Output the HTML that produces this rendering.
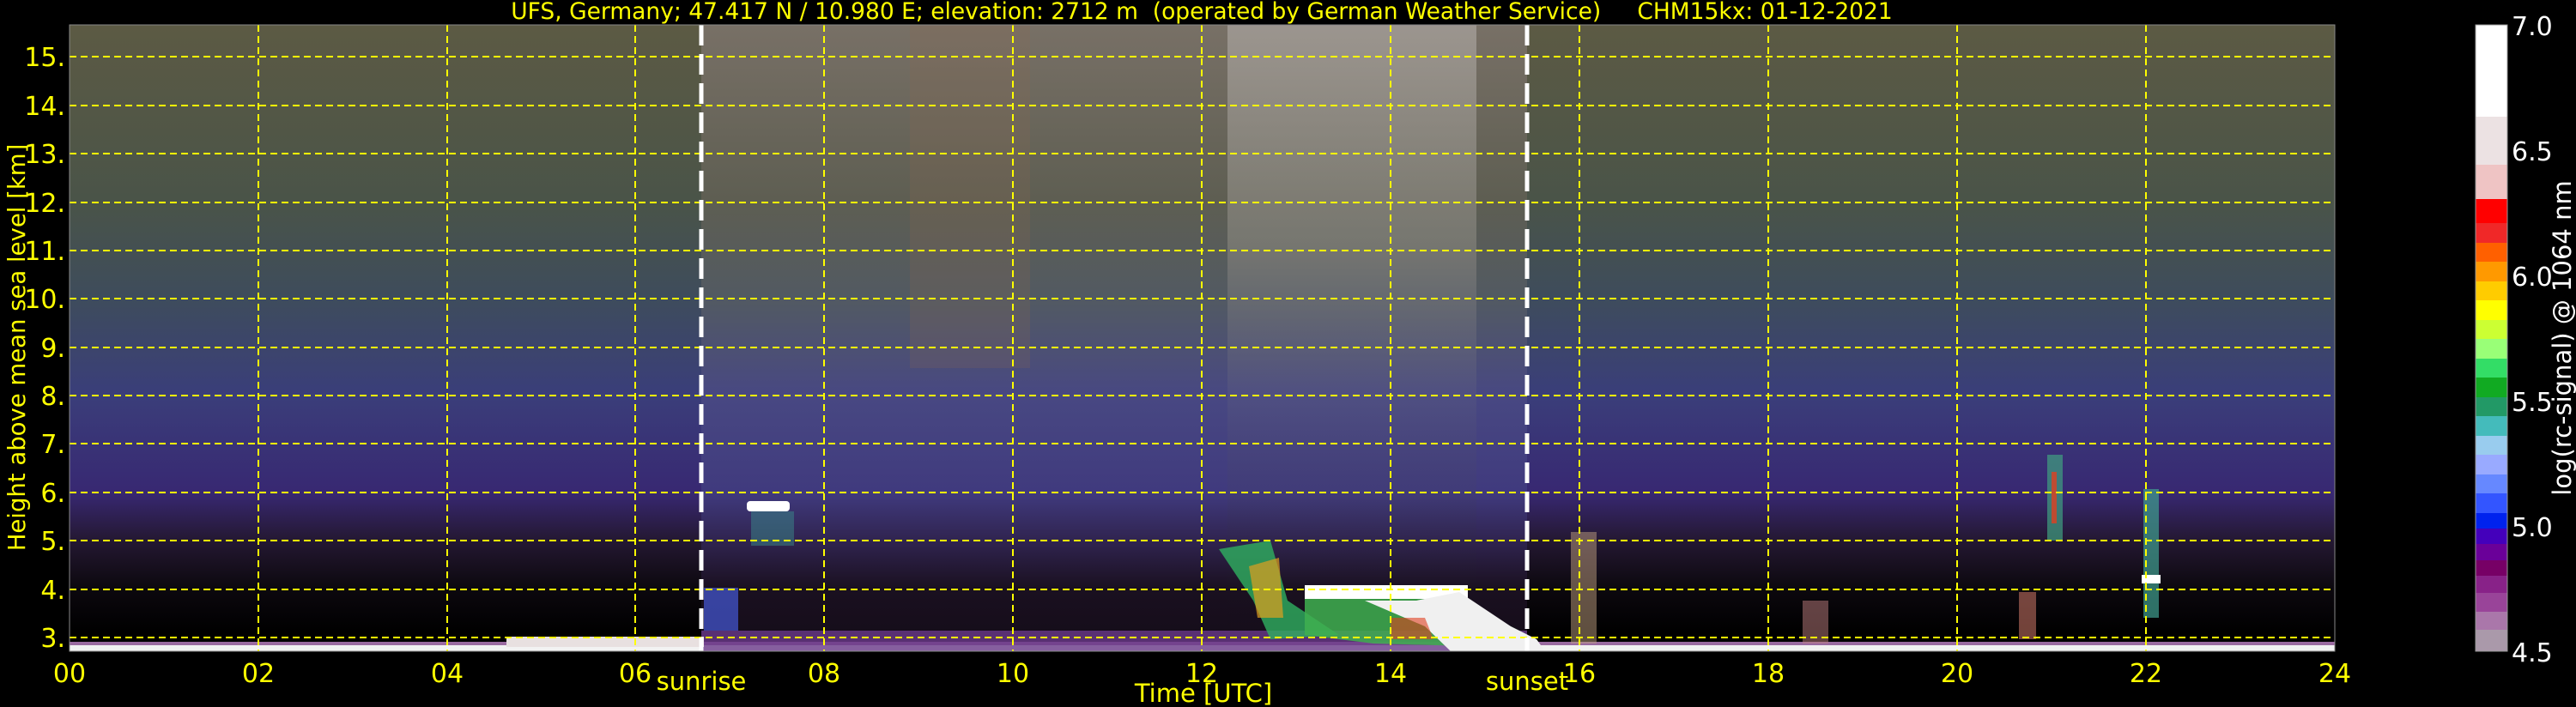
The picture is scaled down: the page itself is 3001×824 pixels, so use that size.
<!DOCTYPE html>
<html><head><meta charset="utf-8"><style>
html,body{margin:0;padding:0;background:#000;width:3001px;height:824px;overflow:hidden}
svg{display:block}
text{font-family:"DejaVu Sans","Liberation Sans",sans-serif;white-space:pre}
</style></head><body>
<svg width="3001" height="824" viewBox="0 0 3001 824" xmlns="http://www.w3.org/2000/svg">
<defs>
<linearGradient id="night" x1="0" y1="29" x2="0" y2="759" gradientUnits="userSpaceOnUse">
<stop offset="0" stop-color="#5c5a44"/>
<stop offset="0.28" stop-color="#4a5448"/>
<stop offset="0.436" stop-color="#3e4c5c"/>
<stop offset="0.59" stop-color="#3a3e7a"/>
<stop offset="0.747" stop-color="#382872"/>
<stop offset="0.823" stop-color="#241832"/>
<stop offset="0.9" stop-color="#0c080e"/>
<stop offset="0.97" stop-color="#000"/>
<stop offset="1" stop-color="#000"/>
</linearGradient>
<linearGradient id="day" x1="0" y1="29" x2="0" y2="759" gradientUnits="userSpaceOnUse">
<stop offset="0" stop-color="#787066"/>
<stop offset="0.28" stop-color="#5e5e52"/>
<stop offset="0.436" stop-color="#525a62"/>
<stop offset="0.59" stop-color="#484882"/>
<stop offset="0.747" stop-color="#403a7e"/>
<stop offset="0.823" stop-color="#302450"/>
<stop offset="0.9" stop-color="#1a1020"/>
<stop offset="1" stop-color="#140c18"/>
</linearGradient>
<linearGradient id="col" x1="0" y1="29" x2="0" y2="759" gradientUnits="userSpaceOnUse">
<stop offset="0" stop-color="#a29c96" stop-opacity="0.85"/>
<stop offset="0.35" stop-color="#8a8880" stop-opacity="0.6"/>
<stop offset="0.6" stop-color="#6a6a80" stop-opacity="0.2"/>
<stop offset="1" stop-color="#000" stop-opacity="0"/>
</linearGradient>
</defs>

<rect x="81" y="29" width="2639" height="730" fill="url(#night)"/>
<rect x="817" y="29" width="962" height="730" fill="url(#day)"/>
<rect x="1430" y="29" width="290" height="730" fill="url(#col)"/>
<rect x="1060" y="29" width="140" height="400" fill="#8a6a50" opacity="0.2"/>

<rect x="81" y="748" width="2639" height="5" fill="#9a6aa0"/>
<rect x="81" y="752" width="2639" height="7" fill="#f2f2f2"/>
<rect x="817" y="735" width="962" height="24" fill="#6a3a8a" opacity="0.8"/>
<rect x="590" y="742" width="230" height="12" fill="#e8e0e0"/>
<rect x="870" y="584" width="50" height="12" fill="#fff" rx="4"/>
<rect x="875" y="596" width="50" height="40" fill="#3a8a8a" opacity="0.5"/>
<rect x="820" y="685" width="40" height="50" fill="#4050c0" opacity="0.8"/>
<path d="M1420 640 L1480 630 L1500 700 L1560 740 L1480 745 L1460 700 Z" fill="#30b060" opacity="0.8"/>
<path d="M1455 660 L1490 650 L1495 720 L1465 720 Z" fill="#e0a020" opacity="0.7"/>
<rect x="1520" y="682" width="190" height="16" fill="#fff"/>
<path d="M1520 698 L1710 698 L1740 720 L1780 740 L1780 755 L1600 750 L1520 740 Z" fill="#40b050" opacity="0.85"/>
<path d="M1590 700 L1650 700 L1700 690 L1760 730 L1790 745 L1800 759 L1690 759 L1660 730 Z" fill="#f0f0f0"/>
<path d="M1620 720 L1660 720 L1670 745 L1620 745 Z" fill="#e04020" opacity="0.6"/>
<rect x="1830" y="620" width="30" height="130" fill="#c0a080" opacity="0.5"/>
<rect x="2100" y="700" width="30" height="50" fill="#c08080" opacity="0.5"/>
<rect x="2352" y="690" width="20" height="55" fill="#c07060" opacity="0.6"/>
<rect x="2385" y="530" width="18" height="100" fill="#40a080" opacity="0.7"/>
<rect x="2390" y="550" width="6" height="60" fill="#e04020" opacity="0.8"/>
<rect x="2497" y="570" width="18" height="150" fill="#40a090" opacity="0.7"/>
<rect x="2495" y="670" width="22" height="10" fill="#fff"/>

<g stroke="#ffff00" stroke-width="2" stroke-dasharray="8,5">
<line x1="81" y1="743" x2="2720" y2="743"/>
<line x1="81" y1="687" x2="2720" y2="687"/>
<line x1="81" y1="630" x2="2720" y2="630"/>
<line x1="81" y1="574" x2="2720" y2="574"/>
<line x1="81" y1="517" x2="2720" y2="517"/>
<line x1="81" y1="461" x2="2720" y2="461"/>
<line x1="81" y1="405" x2="2720" y2="405"/>
<line x1="81" y1="348" x2="2720" y2="348"/>
<line x1="81" y1="292" x2="2720" y2="292"/>
<line x1="81" y1="236" x2="2720" y2="236"/>
<line x1="81" y1="179" x2="2720" y2="179"/>
<line x1="81" y1="123" x2="2720" y2="123"/>
<line x1="81" y1="66" x2="2720" y2="66"/>
<line x1="301" y1="29" x2="301" y2="759"/>
<line x1="521" y1="29" x2="521" y2="759"/>
<line x1="740" y1="29" x2="740" y2="759"/>
<line x1="960" y1="29" x2="960" y2="759"/>
<line x1="1180" y1="29" x2="1180" y2="759"/>
<line x1="1400" y1="29" x2="1400" y2="759"/>
<line x1="1620" y1="29" x2="1620" y2="759"/>
<line x1="1840" y1="29" x2="1840" y2="759"/>
<line x1="2060" y1="29" x2="2060" y2="759"/>
<line x1="2280" y1="29" x2="2280" y2="759"/>
<line x1="2500" y1="29" x2="2500" y2="759"/>
</g>
<g stroke="#fff" stroke-width="5" stroke-dasharray="24,10">
<line x1="817" y1="29" x2="817" y2="759"/>
<line x1="1779" y1="29" x2="1779" y2="759"/>
</g>
<rect x="81" y="29" width="2639" height="730" fill="none" stroke="#888" stroke-width="1"/>

<text x="1400" y="22" fill="#ffff00" font-size="26.5" text-anchor="middle">UFS, Germany; 47.417 N / 10.980 E; elevation: 2712 m  (operated by German Weather Service)     CHM15kx: 01-12-2021</text>

<g fill="#ffff00" font-size="30" text-anchor="end">
<text x="76" y="77">15.</text><text x="76" y="134">14.</text><text x="76" y="190">13.</text>
<text x="76" y="247">12.</text><text x="76" y="303">11.</text><text x="76" y="359">10.</text>
<text x="76" y="416">9.</text><text x="76" y="472">8.</text><text x="76" y="528">7.</text>
<text x="76" y="585">6.</text><text x="76" y="641">5.</text><text x="76" y="698">4.</text>
<text x="76" y="754">3.</text>
</g>
<text transform="translate(29,405) rotate(-90)" fill="#ffff00" font-size="27.5" text-anchor="middle">Height above mean sea level [km]</text>

<g fill="#ffff00" font-size="30" text-anchor="middle">
<text x="81" y="795">00</text><text x="301" y="795">02</text><text x="521" y="795">04</text>
<text x="740" y="795">06</text><text x="960" y="795">08</text><text x="1180" y="795">10</text>
<text x="1400" y="795">12</text><text x="1620" y="795">14</text><text x="1840" y="795">16</text>
<text x="2060" y="795">18</text><text x="2280" y="795">20</text><text x="2500" y="795">22</text>
<text x="2720" y="795">24</text>
</g>
<text x="817" y="804" fill="#ffff00" font-size="29" text-anchor="middle">sunrise</text>
<text x="1779" y="804" fill="#ffff00" font-size="29" text-anchor="middle">sunset</text>
<text x="1402" y="818" fill="#ffff00" font-size="29" text-anchor="middle">Time [UTC]</text>

<g>
<rect x="2884" y="29" width="37" height="107" fill="#ffffff"/>
<rect x="2884" y="136" width="37" height="56" fill="#ece2e3"/>
<rect x="2884" y="192" width="37" height="40" fill="#efc4c4"/>
<rect x="2884" y="232" width="37" height="28" fill="#ff0000"/>
<rect x="2884" y="260" width="37" height="23" fill="#f02828"/>
<rect x="2884" y="283" width="37" height="22" fill="#ff6000"/>
<rect x="2884" y="305" width="37" height="23" fill="#ff9900"/>
<rect x="2884" y="328" width="37" height="22" fill="#ffcc00"/>
<rect x="2884" y="350" width="37" height="23" fill="#ffff00"/>
<rect x="2884" y="373" width="37" height="22" fill="#ccff33"/>
<rect x="2884" y="395" width="37" height="23" fill="#99ff77"/>
<rect x="2884" y="418" width="37" height="22" fill="#33dd66"/>
<rect x="2884" y="440" width="37" height="23" fill="#11aa22"/>
<rect x="2884" y="463" width="37" height="22" fill="#229966"/>
<rect x="2884" y="485" width="37" height="23" fill="#44bbbb"/>
<rect x="2884" y="508" width="37" height="22" fill="#99ccee"/>
<rect x="2884" y="530" width="37" height="23" fill="#99aaff"/>
<rect x="2884" y="553" width="37" height="22" fill="#6688ff"/>
<rect x="2884" y="575" width="37" height="23" fill="#3355ff"/>
<rect x="2884" y="598" width="37" height="18" fill="#0022ee"/>
<rect x="2884" y="616" width="37" height="18" fill="#4400bb"/>
<rect x="2884" y="634" width="37" height="19" fill="#6a0099"/>
<rect x="2884" y="653" width="37" height="18" fill="#770066"/>
<rect x="2884" y="671" width="37" height="20" fill="#882288"/>
<rect x="2884" y="691" width="37" height="22" fill="#994499"/>
<rect x="2884" y="713" width="37" height="21" fill="#aa77aa"/>
<rect x="2884" y="734" width="37" height="25" fill="#aa99aa"/>
<rect x="2884" y="29" width="37" height="730" fill="none" stroke="#999" stroke-width="1"/>
</g>
<g fill="#fff" font-size="30">
<text x="2926" y="41">7.0</text><text x="2926" y="187">6.5</text><text x="2926" y="333">6.0</text>
<text x="2926" y="479">5.5</text><text x="2926" y="625">5.0</text><text x="2926" y="771">4.5</text>
</g>
<text transform="translate(2995,394) rotate(-90)" fill="#fff" font-size="29" text-anchor="middle">log(rc-signal) @ 1064 nm</text>
</svg>
</body></html>
